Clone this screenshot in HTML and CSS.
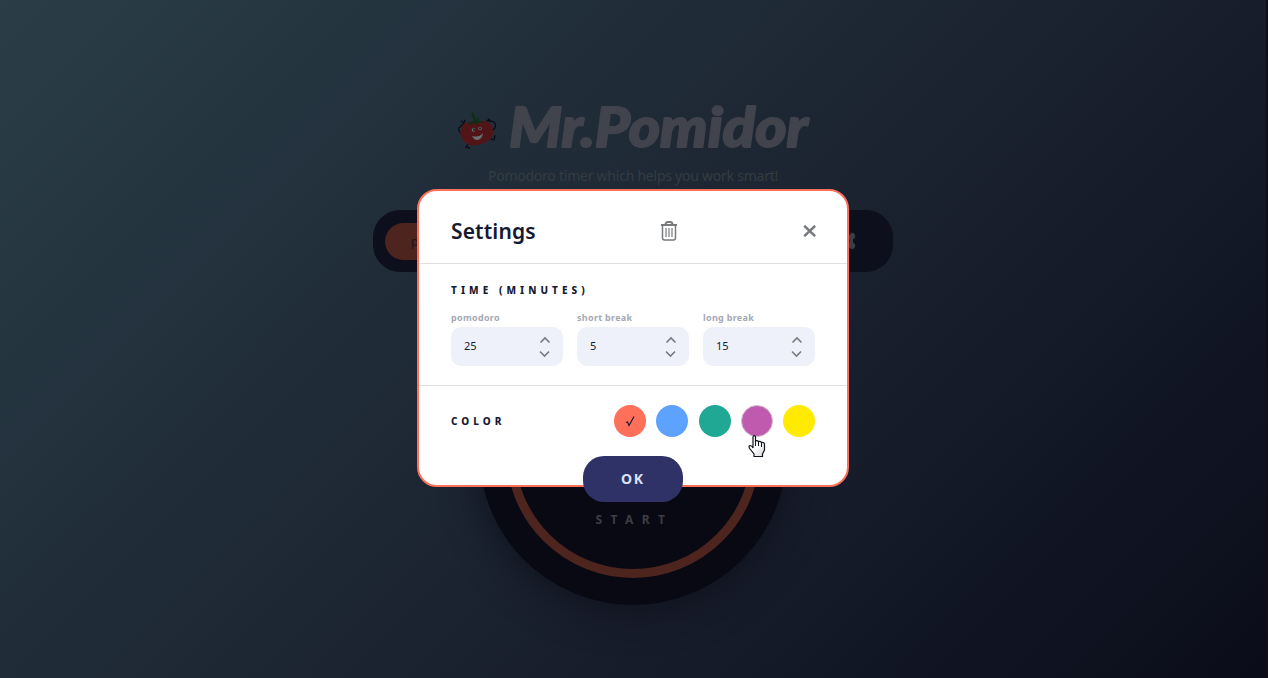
FILE: index.html
```html
<!DOCTYPE html>
<html lang="en">
<head>
<meta charset="utf-8">
<title>Mr.Pomidor</title>
<link rel="stylesheet" href="styles.css">
</head>
<body>
<main class="app">
  <header class="brand">
    <svg class="tomato" viewBox="0 0 40 38" width="40" height="38">
      <g fill="none" stroke="#080d19" stroke-width="1.3"><path d="M7 12L2 17Q0 20 6 23M31 10Q40 9 38 17L34 21M31 27L37 29L38 24M13 30L9 36L13 37M4 10L7 12L8 9M29 11L32 8L34 11"/></g>
      <path fill="#521517" d="M4 19Q6 9 18 11Q30 7 35 15Q39 28 27 32Q12 38 6 29Q2 23 4 19Z"/>
      <path fill="#102e17" d="M10 13Q13 10 17 10L14 3L16 1L19 8L23 6L21 10Q25 10 27 12L21 12L21 15L17 12L13 15L14 12Z"/>
      <g fill="#667075"><circle cx="16.5" cy="19" r="1.8"/><circle cx="23" cy="17.500" r="1.8"/><path d="M15 25Q22 27 26 22Q25 29 20 29Q17 29 15 25"/></g>
      <g fill="#151923"><circle cx="17" cy="19" r="1"/><circle cx="23" cy="17.500" r="1"/></g>
    </svg>
    <svg class="wordmark" width="304" height="62" viewBox="0 0 304 62"><text class="wordmark-text" x="3" y="49" textLength="299" lengthAdjust="spacingAndGlyphs">Mr.Pomidor</text></svg>
  </header>
  <p class="tagline">Pomodoro timer which helps you work smart!</p>
  <nav class="modes">
    <span class="mode">pomodoro</span>
    <svg class="gear" width="20" height="20" viewBox="0 0 20 20"><path fill="#3b3d48" d="M8 1h4l.5 2.500 1 .5Q17-.5 19 4Q20 7 17 8.500v3Q20 13 19 16Q17 20 13.500 16.500L12 19H8l-.5-3-1.500-.8-2.500 1-2.500-3 2-2v-3l-2-2 2.500-3 2.500 1 1.500-.8z"/><circle cx="10" cy="10" r="3.500" fill="#0e0f1d"/></svg>
  </nav>
  <section class="dial"><div class="ring"><span class="start">START</span></div></section>
</main>
<div class="overlay">
  <form class="modal">
    <div class="head">
      <h2 class="title">Settings</h2>
      <svg class="trash" width="18" height="20" viewBox="0 0 18 20"><g fill="none" stroke="#777a7e"><path stroke-width="1.800" d="M1 4H17M5.500 3.500Q5.500 1 8 1H10Q12.500 1 12.500 3.500"/><path stroke-width="1.500" d="M2.500 4V17Q2.500 19 4.500 19H13.500Q15.500 19 15.500 17V4"/><path stroke-width="1.200" d="M6 7V16M9 7V16M12 7V16"/></g></svg>
      <svg class="close" width="13" height="12" viewBox="0 0 13 12"><path stroke="#777a7e" stroke-width="2.500" d="M1.200.800L12.200 11.200M12.200.800L1.200 11.200"/></svg>
    </div>
    <div class="time">
      <h3 class="label">TIME (MINUTES)</h3>
      <div class="fields">
        <label class="field"><span class="name">pomodoro</span><span class="box"><span class="value">25</span><svg class="arrows" width="12" height="24" viewBox="0 0 12 24"><path d="M1.500 7.500L6 3L10.500 7.500M1 16.500L5.500 21L10 16.500"/></svg></span></label>
        <label class="field"><span class="name">short break</span><span class="box"><span class="value">5</span><svg class="arrows" width="12" height="24" viewBox="0 0 12 24"><path d="M1.500 7.500L6 3L10.500 7.500M1 16.500L5.500 21L10 16.500"/></svg></span></label>
        <label class="field"><span class="name">long break</span><span class="box"><span class="value">15</span><svg class="arrows" width="12" height="24" viewBox="0 0 12 24"><path d="M1.500 7.500L6 3L10.500 7.500M1 16.500L5.500 21L10 16.500"/></svg></span></label>
      </div>
    </div>
    <div class="colors">
      <h3 class="label">COLOR</h3>
      <div class="swatches">
        <span class="swatch coral"><svg width="12" height="14" viewBox="0 0 12 14"><path d="M2 8.500L3.500 8L5 11.500L10 2.500" fill="none" stroke="#161932" stroke-width="1.200"/></svg></span>
        <span class="swatch blue"></span><span class="swatch teal"></span><span class="swatch purple"></span><span class="swatch yellow"></span>
      </div>
    </div>
    <button class="ok" type="button">OK</button>
  </form>
</div>
<svg class="pointer" width="18" height="23" viewBox="0 0 18 23"><defs><linearGradient id="hand" x1="0" y1="0" x2="1" y2="1"><stop offset=".5" stop-color="#fff"/><stop offset="1" stop-color="#d5d5d8"/></linearGradient></defs><path fill="url(#hand)" stroke="#11131c" stroke-width="1.200" d="M5 13V2Q5 .7 6.200.7T7.500 2V6Q9 5 10.500 6.500Q12.500 6 13.500 7.500Q16.500 7 16.500 9.500V15L14.500 19V21.500H6V19L2 14Q0 11 2 10.500Q4 10.500 5 13"/><path d="M7.500 5V11M10.500 6.500V11M13.500 7.500V12" stroke="#11131c"/></svg>
</body>
</html>
```
FILE: styles.css
```css
* { box-sizing: border-box; }
html { background: #110f14; }
body { margin: 0; width: 1266px; height: 678px; overflow: hidden; font-family: "Noto Sans", sans-serif; background: linear-gradient(135deg, #2b3d46 0%, #263742 14%, #1f2b37 38%, #1a212e 58%, #111624 80%, #0b0c19 100%); }
h2, h3, p { margin: 0; }
.app { width: 1266px; display: flex; flex-direction: column; align-items: center; padding-top: 98px; }
.brand { display: flex; height: 62px; gap: 9px; width: 353px; }
.tomato { margin-top: 13px; flex: none; }
.wordmark { flex: none; overflow: visible; }
.wordmark-text { font: italic 900 56px Lato, sans-serif; fill: #41434d; stroke: #41434d; stroke-width: 2px; stroke-linejoin: round; }
.tagline { margin-top: 6px; font-size: 14px; line-height: 20px; letter-spacing: -0.24px; color: #353c42; }
.modes { margin-top: 24px; width: 520px; height: 62px; border-radius: 27px; background: #0e0f1d; padding: 12px 37px 12px 12px; display: flex; justify-content: space-between; align-items: center; }
.mode { width: 120px; height: 37px; border-radius: 19px; background: #4d241e; color: #181219; font-size: 12px; line-height: 37px; padding-left: 26px; }
.gear { flex: none; }
.dial { margin-top: 25px; width: 308px; height: 308px; border-radius: 50%; padding: 27px; background: #090913; box-shadow: 0 5px 40px #0f111e; }
.ring { height: 254px; border: 9px solid #4d241e; border-radius: 50%; display: flex; justify-content: center; align-items: flex-end; padding-bottom: 40px; }
.start { color: #3b3d45; font-size: 12px; font-weight: 700; line-height: 18px; letter-spacing: 8.4px; margin-right: -3px; }
.overlay { position: absolute; top: 0; left: 0; width: 1266px; height: 678px; padding-top: 189px; display: flex; justify-content: center; align-items: flex-start; }
.modal { width: 432px; height: 298px; background: #fff; border: 2px solid #ff705a; border-radius: 20px; display: flex; flex-direction: column; align-items: center; color: #161932; }
.head { width: 100%; height: 73px; padding: 8px 31px 0 32px; display: flex; align-items: center; border-bottom: 1px solid #e0e0e2; flex: none; }
.title { font-size: 21px; line-height: 30px; font-weight: 600; letter-spacing: .12px; width: 209px; }
.close { margin-left: auto; }
.time { width: 100%; height: 122px; padding: 18px 32px 0; border-bottom: 1px solid #e0e0e2; flex: none; }
.label { font-size: 10px; line-height: 16px; font-weight: 800; letter-spacing: 4.05px; }
.fields { display: flex; gap: 14px; margin-top: 13px; }
.field { width: 112px; }
.name { display: block; font-size: 9px; line-height: 14px; font-weight: 700; letter-spacing: .3px; color: #a5a8b4; margin-bottom: 2px; }
.box { height: 39px; border-radius: 10px; background: #eef1fa; display: flex; align-items: center; justify-content: space-between; padding: 0 12px 0 13px; font-size: 11px; }
.value { padding-bottom: 2px; }
.arrows path { fill: none; stroke: #777a7e; stroke-width: 1.6; }
.colors { width: 100%; height: 70px; padding: 0 32px; display: flex; align-items: center; justify-content: space-between; flex: none; }
.swatches { display: flex; gap: 10.25px; }
.swatch { width: 32px; height: 32px; border-radius: 50%; display: grid; place-items: center; }
.coral { background: #ff705a; }
.blue { background: #5da2ff; }
.teal { background: #20a895; }
.purple { background: #c05aae; border: 1px solid #d2bbd0; }
.yellow { background: #ffea00; }
.ok { width: 100px; height: 46px; padding: 0 0 2px; border: 0; border-radius: 21px; background: #2e3266; color: #dbe2fa; font: 700 14px "Noto Sans", sans-serif; letter-spacing: 1.8px; flex: none; }
.pointer { position: absolute; left: 748px; top: 435px; }
```
